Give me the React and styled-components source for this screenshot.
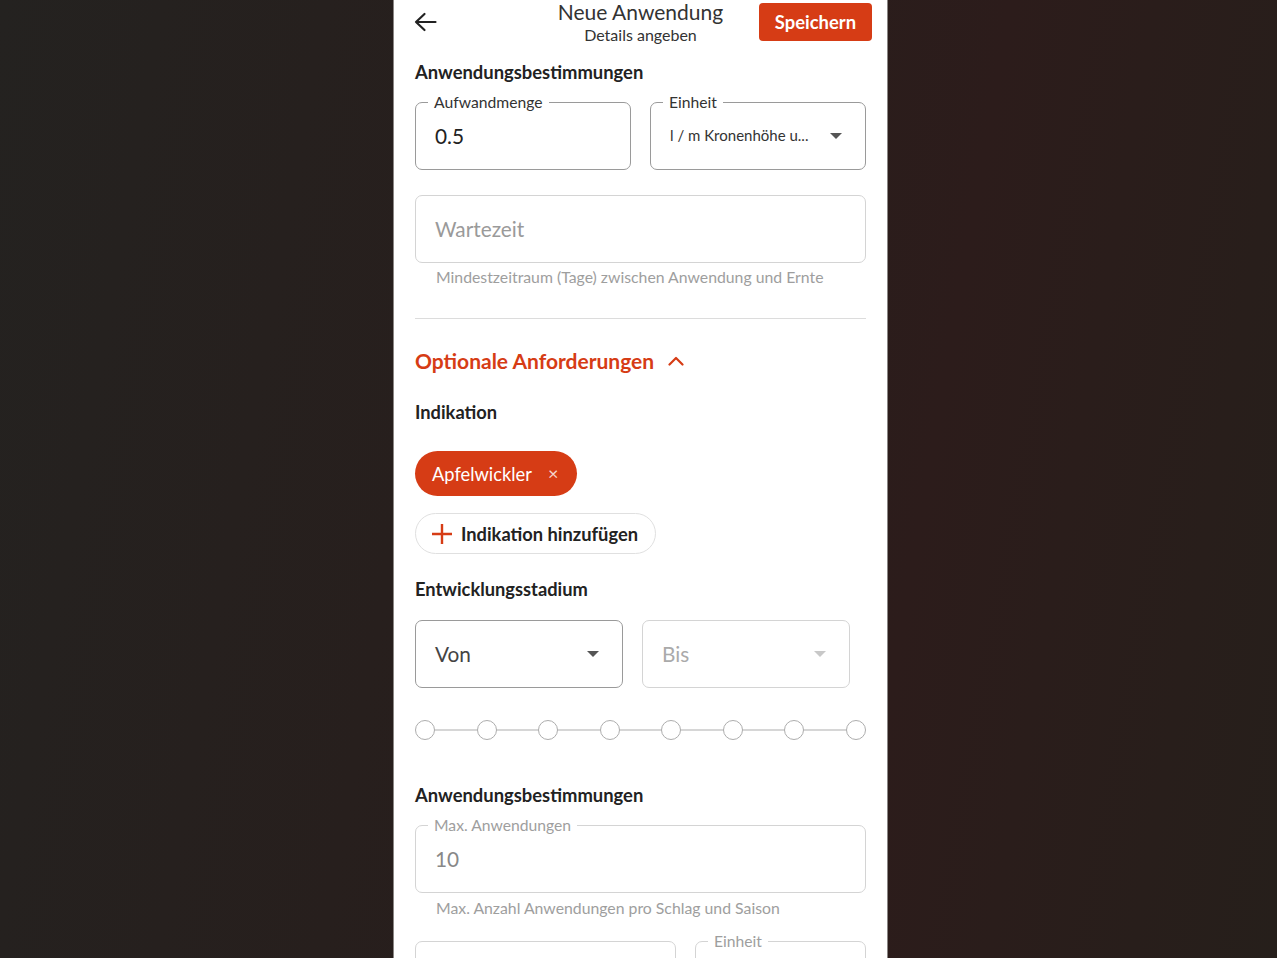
import React from "react";
import styled, { createGlobalStyle } from "styled-components";

const RED = "#d63c15";

const Global = createGlobalStyle`
  html, body { margin: 0; padding: 0; height: 100%; overflow: hidden; }
  body {
    font-family: Lato, "Open Sans", sans-serif;
    background: linear-gradient(100deg, #242220 0%, #281e1c 45%, #2c1c1b 70%, #261f1b 100%);
  }
  * { box-sizing: border-box; }
`;

const Stage = styled.div`
  height: 100vh;
  display: flex;
  justify-content: center;
  padding-left: 4px;
`;

const Panel = styled.div`
  width: 495px;
  height: 100vh;
  background: #fff;
  border-left: 1px solid #8a8684;
  border-right: 1px solid #8a8684;
  overflow: hidden;
  display: flex;
  flex-direction: column;
`;

const Header = styled.header`
  height: 48px;
  display: grid;
  grid-template-columns: 1fr auto 1fr;
  align-items: start;
  padding: 0 15px;
`;

const BackButton = styled.button`
  justify-self: start;
  margin: 11px 0 0 5px;
  padding: 0;
  border: 0;
  background: none;
  width: 24px;
  height: 22px;
  display: flex;
  align-items: center;
  color: #222;
`;

const TitleBlock = styled.div`
  display: flex;
  flex-direction: column;
  align-items: center;
  margin-top: -1px;
`;

const Title = styled.div`
  font-size: 21px;
  line-height: 25px;
  color: #333;
`;

const Subtitle = styled.div`
  font-size: 16px;
  line-height: 20px;
  color: #333;
  margin-top: 1px;
`;

const SaveButton = styled.button`
  justify-self: end;
  margin-top: 3px;
  height: 38px;
  padding: 0 16px;
  border: 0;
  border-radius: 4px;
  background: ${RED};
  color: #fff;
  font-family: inherit;
  font-weight: 700;
  font-size: 18.4px;
`;

const Content = styled.div`
  padding: 0 21px;
  display: flex;
  flex-direction: column;
`;

const SectionTitle = styled.div`
  margin-top: ${(p) => p.$mt}px;
  font-weight: 700;
  font-size: 18.4px;
  line-height: 24px;
  color: #222;
`;

const SubTitle = styled.div`
  margin-top: ${(p) => p.$mt}px;
  font-weight: 700;
  font-size: 18.3px;
  line-height: 22px;
  color: #222;
`;

const Row = styled.div`
  margin-top: ${(p) => p.$mt || 0}px;
  display: grid;
  grid-template-columns: ${(p) => p.$cols};
  column-gap: 19px;
`;

const Field = styled.div`
  position: relative;
  height: 68px;
  border: 1.5px solid ${(p) => (p.$muted ? "#d4d4d4" : "#9a9a9a")};
  border-radius: 7px;
  display: flex;
  align-items: center;
  justify-content: space-between;
  padding: 0 23px 2px 19px;
  margin-top: ${(p) => p.$mt || 0}px;
`;

const FloatLabel = styled.span`
  position: absolute;
  top: -11px;
  left: 12px;
  padding: 0 6px;
  background: #fff;
  font-size: 15.7px;
  line-height: 20px;
  color: ${(p) => (p.$muted ? "#9e9e9e" : "#333")};
`;

const Value = styled.span`
  font-size: ${(p) => p.$size || 20.8}px;
  color: ${(p) => p.$color || "#222"};
  white-space: nowrap;
`;

const Caret = styled.span`
  width: 0;
  height: 0;
  border-left: 6px solid transparent;
  border-right: 6px solid transparent;
  border-top: 6px solid ${(p) => p.$color || "#555"};
  margin-top: 2px;
`;

const Helper = styled.div`
  margin-top: ${(p) => p.$mt}px;
  padding-left: 21px;
  font-size: 15.8px;
  line-height: 20px;
  color: #9e9e9e;
`;

const Divider = styled.hr`
  margin: 31px 0 0;
  border: 0;
  border-top: 1px solid #dcdcdc;
  height: 0;
`;

const Toggle = styled.div`
  margin-top: 29px;
  display: flex;
  align-items: center;
  gap: 14px;
  color: ${RED};
  font-size: 21px;
  line-height: 26px;
  font-weight: 700;
`;

const Chip = styled.div`
  margin-top: 28px;
  align-self: flex-start;
  height: 45px;
  border-radius: 23px;
  background: ${RED};
  color: #fff;
  display: flex;
  align-items: center;
  gap: 16px;
  padding: 0 19px 0 17px;
  font-size: 18.3px;
`;

const ChipClose = styled.span`
  color: rgba(255, 255, 255, 0.8);
  font-size: 18px;
  line-height: 1;
  margin-top: -2px;
`;

const AddButton = styled.button`
  margin-top: 17px;
  align-self: flex-start;
  height: 41px;
  border: 1.5px solid #e0e0e0;
  border-radius: 21px;
  background: #fff;
  display: flex;
  align-items: center;
  gap: 8px;
  padding: 0 17px 0 15px;
  font-family: inherit;
  font-weight: 700;
  font-size: 18.3px;
  color: #222;
`;

const Stepper = styled.div`
  margin-top: 32px;
  position: relative;
  display: flex;
  justify-content: space-between;
  align-items: center;
  height: 20px;
`;

const StepLine = styled.div`
  position: absolute;
  left: 10px;
  right: 10px;
  top: 50%;
  border-top: 1.5px solid #adadad;
  transform: translateY(-50%);
`;

const StepDot = styled.span`
  position: relative;
  width: 20px;
  height: 20px;
  border-radius: 50%;
  border: 1.5px solid #adadad;
  background: #fff;
`;

const ArrowLeftIcon = () => (
  <svg width="23" height="20" viewBox="0 0 23 20" fill="none" stroke="#222" strokeWidth="2.2" strokeLinecap="round" strokeLinejoin="round">
    <path d="M21.5 10H2M10.5 2L2 10l8.5 8" />
  </svg>
);

const ChevronUp = () => (
  <svg width="16" height="10" viewBox="0 0 16 10" fill="none" stroke={RED} strokeWidth="2.2" strokeLinecap="round" strokeLinejoin="round">
    <path d="M1.5 8.5L8 2l6.5 6.5" />
  </svg>
);

const PlusIcon = () => (
  <svg width="22" height="22" viewBox="0 0 22 22" fill="none" stroke={RED} strokeWidth="2.4" strokeLinecap="butt">
    <path d="M11 1v20M1 11h20" />
  </svg>
);

export default function App() {
  return (
    <>
      <Global />
      <Stage>
        <Panel>
          <Header>
            <BackButton aria-label="Zurück">
              <ArrowLeftIcon />
            </BackButton>
            <TitleBlock>
              <Title>Neue Anwendung</Title>
              <Subtitle>Details angeben</Subtitle>
            </TitleBlock>
            <SaveButton>Speichern</SaveButton>
          </Header>

          <Content>
            <SectionTitle $mt={15}>Anwendungsbestimmungen</SectionTitle>

            <Row $mt={18} $cols="1fr 1fr">
              <Field>
                <FloatLabel>Aufwandmenge</FloatLabel>
                <Value>0.5</Value>
              </Field>
              <Field>
                <FloatLabel>Einheit</FloatLabel>
                <Value $size={15} $color="#333">l / m Kronenhöhe u...</Value>
                <Caret />
              </Field>
            </Row>

            <Field $muted $mt={25}>
              <Value $color="#9a9a9a">Wartezeit</Value>
            </Field>
            <Helper $mt={4}>Mindestzeitraum (Tage) zwischen Anwendung und Ernte</Helper>

            <Divider />

            <Toggle>
              Optionale Anforderungen
              <ChevronUp />
            </Toggle>

            <SubTitle $mt={27}>Indikation</SubTitle>

            <Chip>
              Apfelwickler
              <ChipClose>×</ChipClose>
            </Chip>

            <AddButton>
              <PlusIcon />
              Indikation hinzufügen
            </AddButton>

            <SubTitle $mt={24}>Entwicklungsstadium</SubTitle>

            <Row $mt={20} $cols="208px 208px">
              <Field>
                <Value $color="#444">Von</Value>
                <Caret $color="#555" />
              </Field>
              <Field $muted>
                <Value $color="#aaa">Bis</Value>
                <Caret $color="#c8c8c8" />
              </Field>
            </Row>

            <Stepper>
              <StepLine />
              {Array.from({ length: 8 }).map((_, i) => (
                <StepDot key={i} />
              ))}
            </Stepper>

            <SectionTitle $mt={43}>Anwendungsbestimmungen</SectionTitle>

            <Field $muted $mt={18}>
              <FloatLabel $muted>Max. Anwendungen</FloatLabel>
              <Value $color="#888">10</Value>
            </Field>
            <Helper $mt={5}>Max. Anzahl Anwendungen pro Schlag und Saison</Helper>

            <Row $mt={23} $cols="261px 1fr">
              <Field $muted />
              <Field $muted>
                <FloatLabel $muted>Einheit</FloatLabel>
              </Field>
            </Row>
          </Content>
        </Panel>
      </Stage>
    </>
  );
}
